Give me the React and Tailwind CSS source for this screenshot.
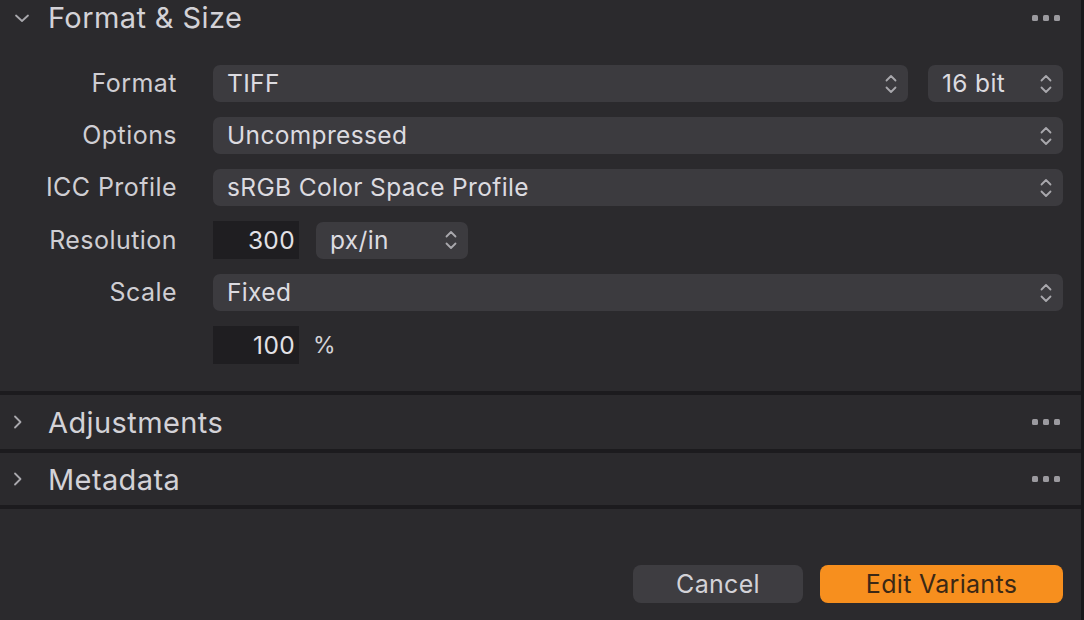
import React from 'react';

const UpDown = () => (
  <svg width="14" height="24" viewBox="0 0 14 24" fill="none" stroke="#a9a8ad" strokeWidth="1.8" strokeLinecap="round" strokeLinejoin="round">
    <path d="M2.5 8.5 L7 4 L11.5 8.5" />
    <path d="M2.5 15.5 L7 20 L11.5 15.5" />
  </svg>
);

const Dots = () => (
  <div className="flex gap-[5px]">
    <span className="w-[6px] h-[6px] rounded-[1.5px] bg-[#9b9a9f]" />
    <span className="w-[6px] h-[6px] rounded-[1.5px] bg-[#9b9a9f]" />
    <span className="w-[6px] h-[6px] rounded-[1.5px] bg-[#9b9a9f]" />
  </div>
);

const Select = ({ value, className = '' }) => (
  <div className={`h-[37px] rounded-[7px] bg-[#3c3b3f] flex items-center justify-between pl-[14px] pr-[10px] ${className}`}>
    <span className="text-[24.5px] leading-none tracking-[0.35px] text-[#dcdbe0]">{value}</span>
    <UpDown />
  </div>
);

const Field = ({ value }) => (
  <div className="h-[38px] w-[86px] bg-[#1f1e21] flex items-center justify-end pr-[4px]">
    <span className="text-[24.5px] leading-none tracking-[0.35px] text-[#e2e1e6]">{value}</span>
  </div>
);

const Row = ({ label, children }) => (
  <div className="flex items-center">
    <div className="w-[178px] text-right text-[25px] leading-none tracking-[0.45px] text-[#cfced3] pr-[1px]">{label}</div>
    <div className="flex-1 ml-[35px] flex items-center">{children}</div>
  </div>
);

const Section = ({ title, h }) => (
  <div className={`flex items-center justify-between pl-[11px] pr-[21px] ${h} border-b-[4px] border-[#1c1b1e]`}>
    <div className="flex items-center gap-[23px]">
      <svg width="14" height="16" viewBox="0 0 14 16" fill="none" stroke="#a9a8ad" strokeWidth="1.8" strokeLinecap="round" strokeLinejoin="round">
        <path d="M4 2.5 L9.5 8 L4 13.5" />
      </svg>
      <span className="text-[29px] leading-none tracking-[0.4px] text-[#d3d2d7]">{title}</span>
    </div>
    <Dots />
  </div>
);

export default function App() {
  return (
    <div className="w-[1084px] h-[620px] overflow-hidden bg-[#2b2a2d] border-r-[3px] border-[#19181b] flex flex-col" style={{ fontFamily: 'Inter, "Liberation Sans", sans-serif' }}>
      <div className="border-b-[4px] border-[#1c1b1e] pr-[18px]">
        <div className="h-[35px] flex items-center justify-between pl-[13px] pr-[3px]">
          <div className="flex items-center gap-[17px]">
            <svg width="18" height="12" viewBox="0 0 18 12" fill="none" stroke="#a9a8ad" strokeWidth="1.8" strokeLinecap="round" strokeLinejoin="round">
              <path d="M3 3.5 L9 9 L15 3.5" />
            </svg>
            <span className="text-[29px] leading-none tracking-[0.4px] text-[#d3d2d7]">Format &amp; Size</span>
          </div>
          <Dots />
        </div>
        <div className="flex flex-col gap-[15px] pt-[30px] pb-[27px]">
          <Row label="Format">
            <Select value="TIFF" className="flex-1" />
            <Select value="16 bit" className="w-[135px] ml-[20px]" />
          </Row>
          <Row label="Options">
            <Select value="Uncompressed" className="flex-1" />
          </Row>
          <Row label="ICC Profile">
            <Select value="sRGB Color Space Profile" className="flex-1" />
          </Row>
          <Row label="Resolution">
            <Field value="300" />
            <Select value="px/in" className="w-[152px] ml-[17px]" />
          </Row>
          <Row label="Scale">
            <Select value="Fixed" className="flex-1" />
          </Row>
          <Row label="">
            <Field value="100" />
            <span className="ml-[14px] text-[23px] leading-none text-[#d3d2d7]">%</span>
          </Row>
        </div>
      </div>
      <Section title="Adjustments" h="h-[58px]" />
      <Section title="Metadata" h="h-[56px]" />
      <div className="flex-1 flex items-end justify-end gap-[17px] pr-[18px] pb-[17px]">
        <button className="w-[170px] h-[38px] rounded-[8px] bg-[#3e3d41] text-[25px] leading-none tracking-[0.3px] text-[#d3d2d7]">Cancel</button>
        <button className="w-[243px] h-[38px] rounded-[8px] bg-[#f78f1e] text-[25px] leading-none tracking-[0.3px] text-[#3b2815]">Edit Variants</button>
      </div>
    </div>
  );
}
